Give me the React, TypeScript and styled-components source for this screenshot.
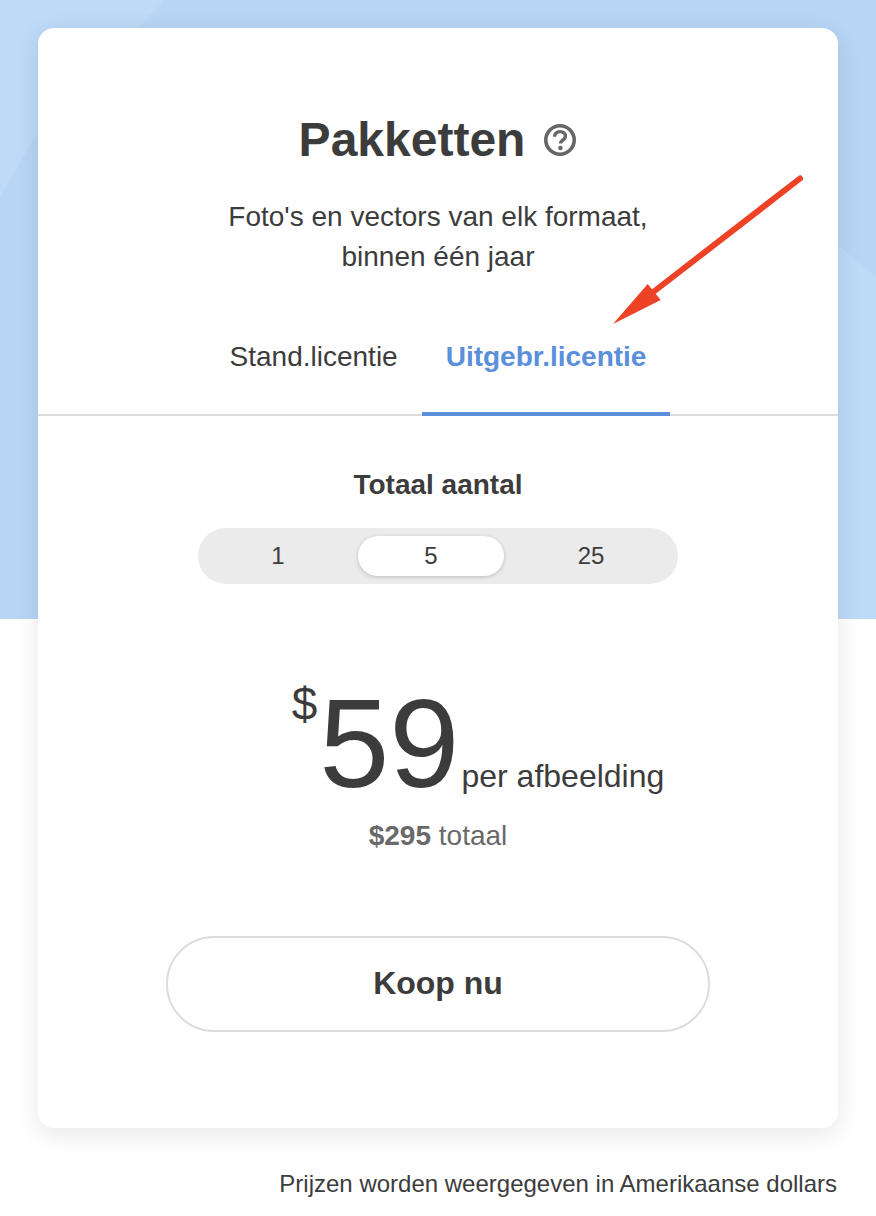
import React, { useState } from "react";
import styled, { createGlobalStyle } from "styled-components";

const GlobalStyle = createGlobalStyle`
  html, body {
    margin: 0;
    padding: 0;
    background: #fff;
  }
  body {
    font-family: "Liberation Sans", Arial, sans-serif;
    color: #3c3c3c;
  }
`;

const Page = styled.div`
  position: relative;
  width: 876px;
  height: 1216px;
  padding: 28px 38px 0;
  box-sizing: border-box;
  overflow: hidden;
  background: linear-gradient(#b8d5f6, #b8d5f6) top / 100% 619px no-repeat #fff;
`;

const Backdrop = styled.svg`
  position: absolute;
  top: 0;
  left: 0;
`;

const Card = styled.main`
  position: relative;
  width: 800px;
  height: 1100px;
  box-sizing: border-box;
  padding-top: 84px;
  background: #fff;
  border-radius: 16px;
  box-shadow: 0 6px 24px rgba(0, 0, 0, 0.1);
`;

const TitleRow = styled.div`
  display: flex;
  justify-content: center;
  align-items: center;
  gap: 18px;
  height: 56px;
`;

const Title = styled.h2`
  margin: 0;
  font-size: 48px;
  font-weight: 700;
  line-height: 56px;
  color: #3c3c3c;
`;

const Description = styled.p`
  margin: 29px 0 0;
  font-size: 28px;
  line-height: 40px;
  text-align: center;
  color: #3c3c3c;
`;

const TabBar = styled.div`
  display: flex;
  justify-content: center;
  margin-top: 40px;
  height: 97px;
  border-bottom: 2px solid #dcdcdc;
`;

const Tab = styled.button<{ $active?: boolean }>`
  height: 99px;
  padding: 0 24px 15px;
  border: 0;
  border-bottom: 4px solid ${(p) => (p.$active ? "#5a8fdb" : "transparent")};
  box-sizing: border-box;
  background: none;
  font-family: inherit;
  font-size: 28px;
  font-weight: ${(p) => (p.$active ? 700 : 400)};
  color: ${(p) => (p.$active ? "#5a8fdb" : "#3c3c3c")};
  cursor: pointer;
`;

const Section = styled.section`
  display: flex;
  flex-direction: column;
  align-items: center;
`;

const Label = styled.div`
  margin-top: 52px;
  font-size: 28px;
  font-weight: 700;
  line-height: 34px;
  color: #3c3c3c;
`;

const Segments = styled.div`
  display: grid;
  grid-template-columns: 160px 146px 174px;
  align-items: center;
  width: 480px;
  height: 56px;
  margin-top: 26px;
  border-radius: 28px;
  background: #ebebeb;
`;

const Segment = styled.button<{ $active?: boolean }>`
  height: 40px;
  padding: 0;
  border: 0;
  border-radius: 20px;
  background: ${(p) => (p.$active ? "#fff" : "transparent")};
  box-shadow: ${(p) => (p.$active ? "0 1px 4px rgba(0, 0, 0, 0.2)" : "none")};
  font-family: inherit;
  font-size: 24px;
  color: #3c3c3c;
  cursor: pointer;
`;

const PriceRow = styled.div`
  display: flex;
  align-items: baseline;
  height: 110px;
  margin-top: 100px;
  margin-left: 80px;
`;

const Currency = styled.span`
  align-self: flex-start;
  font-size: 46px;
  line-height: 40px;
`;

const Amount = styled.span`
  margin-left: 2px;
  font-size: 126px;
  line-height: 120px;
  color: #3c3c3c;
`;

const Unit = styled.span`
  margin-left: 2px;
  font-size: 32px;
  color: #3c3c3c;
`;

const Total = styled.div`
  margin-top: 25px;
  font-size: 28px;
  line-height: 34px;
  color: #696969;

  b {
    font-weight: 700;
  }
`;

const BuyButton = styled.button`
  width: 544px;
  height: 96px;
  margin-top: 83px;
  padding: 0 0 2px;
  border: 2px solid #dcdcdc;
  border-radius: 48px;
  background: #fff;
  font-family: inherit;
  font-size: 32px;
  font-weight: 700;
  color: #3c3c3c;
  cursor: pointer;
`;

const Footnote = styled.p`
  width: 799px;
  margin: 42px 0 0;
  font-size: 24px;
  line-height: 28px;
  text-align: right;
  color: #3c3c3c;
`;

const Arrow = styled.svg`
  position: absolute;
  top: 0;
  left: 0;
  pointer-events: none;
`;

function HelpIcon() {
  return (
    <svg width="34" height="34" viewBox="0 0 34 34" fill="none" aria-hidden="true">
      <circle cx="17" cy="17" r="14.2" stroke="#666" strokeWidth="3.6" />
      <path
        d="M11.6 13.8c0-3.2 2.3-5.2 5.5-5.2 3.1 0 5.3 1.8 5.3 4.5 0 2-1 3.1-2.7 4.2-1.5 1-2.2 1.7-2.2 3.3"
        stroke="#666"
        strokeWidth="3.4"
      />
      <circle cx="17.4" cy="25" r="2.2" fill="#666" />
    </svg>
  );
}

const counts = ["1", "5", "25"];

export default function App() {
  const [count, setCount] = useState("5");
  const [tab, setTab] = useState("extended");
  return (
    <>
      <GlobalStyle />
      <Page>
        <Backdrop width="876" height="619" aria-hidden="true">
          <polygon points="0,0 165,0 38,132 0,197" fill="#bedaf8" />
          <polygon points="838,245 876,277 876,619 838,619" fill="#bddaf8" />
        </Backdrop>
        <Card>
          <TitleRow>
            <Title>Pakketten</Title>
            <HelpIcon />
          </TitleRow>
          <Description>
            Foto's en vectors van elk formaat,
            <br />
            binnen één jaar
          </Description>
          <TabBar>
            <Tab $active={tab === "standard"} onClick={() => setTab("standard")}>
              Stand.licentie
            </Tab>
            <Tab $active={tab === "extended"} onClick={() => setTab("extended")}>
              Uitgebr.licentie
            </Tab>
          </TabBar>
          <Section>
            <Label>Totaal aantal</Label>
            <Segments>
              {counts.map((c) => (
                <Segment key={c} $active={c === count} onClick={() => setCount(c)}>
                  {c}
                </Segment>
              ))}
            </Segments>
            <PriceRow>
              <Currency>$</Currency>
              <Amount>59</Amount>
              <Unit>per afbeelding</Unit>
            </PriceRow>
            <Total>
              <b>$295</b> totaal
            </Total>
            <BuyButton>Koop nu</BuyButton>
          </Section>
        </Card>
        <Footnote>Prijzen worden weergegeven in Amerikaanse dollars</Footnote>
        <Arrow width="876" height="1216" aria-hidden="true">
          <line x1="800" y1="178.5" x2="652" y2="293" stroke="#ee4226" strokeWidth="6" strokeLinecap="round" />
          <polygon points="613,324 647.7,284 660.7,300" fill="#ee4226" />
        </Arrow>
      </Page>
    </>
  );
}
